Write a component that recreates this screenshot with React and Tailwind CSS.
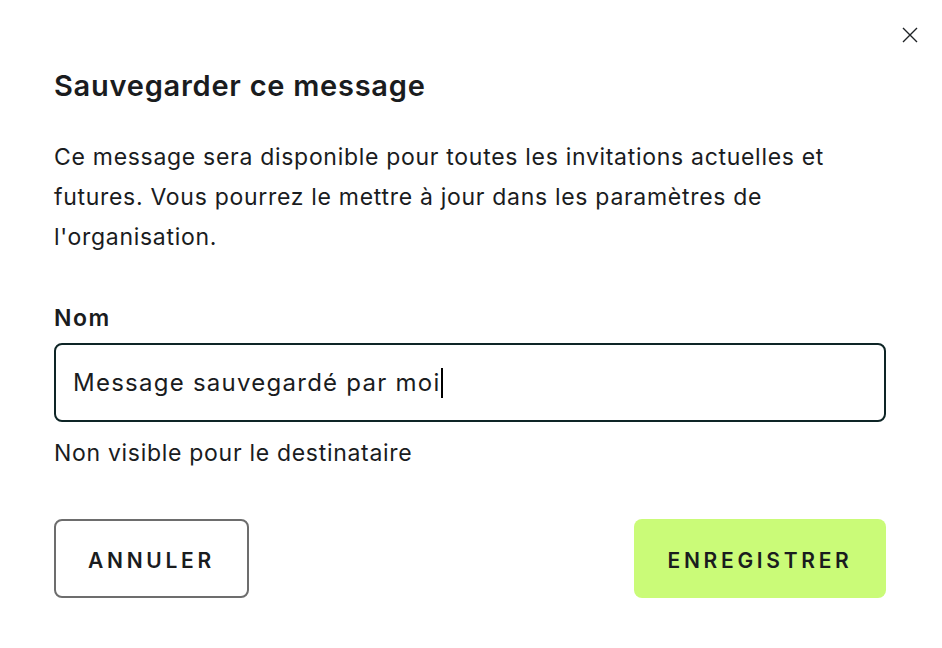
import React from "react";

const CloseIcon = () => (
  <svg width="18" height="18" viewBox="0 0 18 18" fill="none" stroke="#1f2326" strokeWidth="1.4">
    <path d="M2 2 L16 16 M16 2 L2 16" />
  </svg>
);

const SaveMessageDialog = () => {
  const name = "Message sauvegardé par moi";

  return (
    <div className="relative w-[942px] h-[648px] bg-white text-[#1a1c1e] font-['Inter',sans-serif]">
      <button className="absolute right-[21px] top-[24px] p-0.5" aria-label="Fermer">
        <CloseIcon />
      </button>
      <div className="pl-[54px] pr-[56px] pt-[66px]">
        <h2 className="text-[29px] leading-[40px] font-semibold tracking-[0.75px]">
          Sauvegarder ce message
        </h2>
        <p className="mt-[31px] text-[23px] leading-[40px] tracking-[0.7px] pr-[20px]">
          Ce message sera disponible pour toutes les invitations actuelles et
          futures. Vous pourrez le mettre à jour dans les paramètres de
          l'organisation.
        </p>
        <label className="block mt-[46px] text-[23px] leading-[30px] font-semibold tracking-[1.5px]">
          Nom
        </label>
        <div
          role="textbox"
          className="mt-[10px] w-full h-[79px] rounded-[8px] border-2 border-[#0e2526] px-[17px] flex items-center text-[24px] tracking-[1.25px]"
        >
          <span>{name}</span>
          <span className="ml-[1px] w-[2px] h-[30px] bg-black" />
        </div>
        <p className="mt-[16px] text-[23px] leading-[30px] tracking-[0.7px]">
          Non visible pour le destinataire
        </p>
        <div className="mt-[51px] flex items-center justify-between">
          <button className="w-[195px] h-[79px] pt-[5px] rounded-[8px] border-2 border-[#6d6d6d] text-[21px] font-semibold tracking-[3.7px]">
            ANNULER
          </button>
          <button className="w-[252px] h-[79px] pt-[5px] rounded-[8px] bg-[#cafb78] text-[21px] font-semibold tracking-[3.7px]">
            ENREGISTRER
          </button>
        </div>
      </div>
    </div>
  );
};

export default function App() {
  return <SaveMessageDialog />;
}
